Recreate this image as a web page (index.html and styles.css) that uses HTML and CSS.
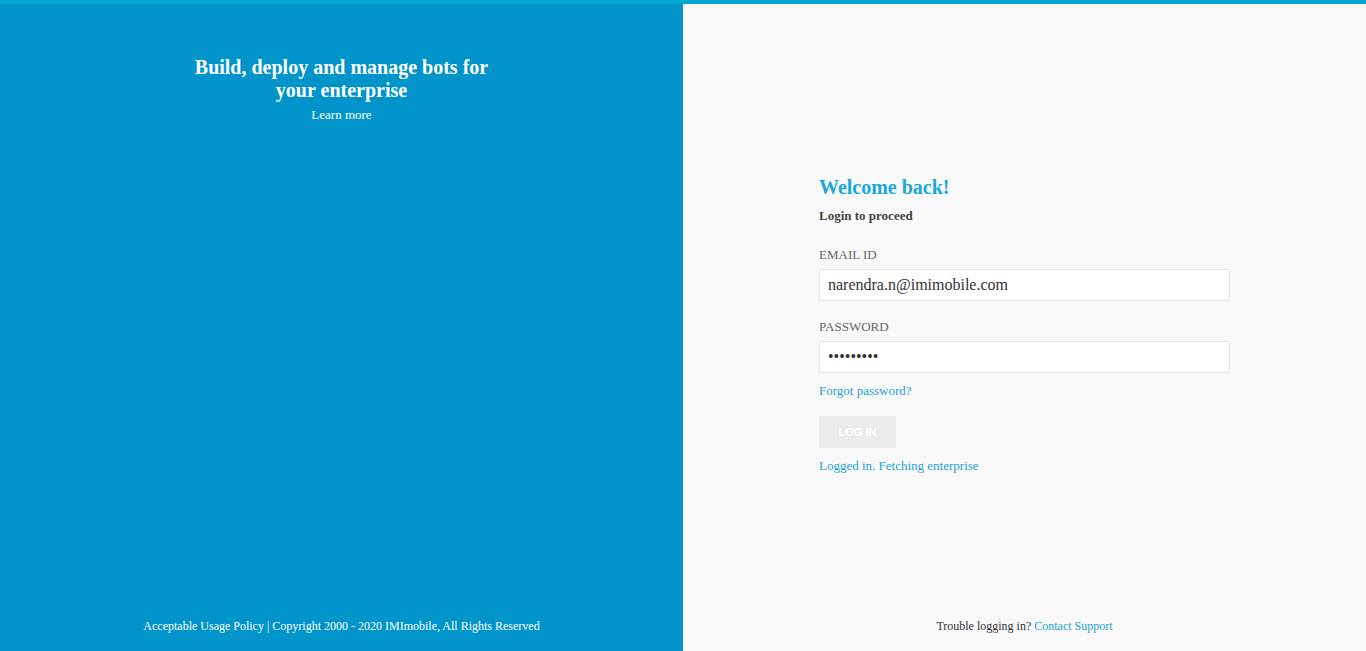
FILE: index.html
```html
<!DOCTYPE html>
<html lang="en">
<head>
<meta charset="utf-8">
<title>Login</title>
<link rel="stylesheet" href="styles.css">
</head>
<body>
<div class="topbar"></div>
<main class="split">
  <section class="brand">
    <div class="brand-copy">
      <h1 class="brand-title">Build, deploy and manage bots for your enterprise</h1>
      <a class="brand-link" href="#">Learn more</a>
    </div>
    <footer class="foot foot-left">Acceptable Usage Policy | Copyright 2000 - 2020 IMImobile, All Rights Reserved</footer>
  </section>
  <section class="login">
    <form class="login-form">
      <h2 class="welcome">Welcome back!</h2>
      <p class="sub">Login to proceed</p>
      <label class="field-label first" for="email">EMAIL ID</label>
      <input class="field" id="email" type="text" value="narendra.n@imimobile.com">
      <label class="field-label" for="pw">PASSWORD</label>
      <input class="field" id="pw" type="password" value="123456789">
      <a class="link forgot" href="#">Forgot password?</a>
      <button class="btn" type="button">LOG IN</button>
      <div class="status">Logged in. Fetching enterprise</div>
    </form>
    <footer class="foot foot-right">Trouble logging in? <a class="link" href="#">Contact Support</a></footer>
  </section>
</main>
</body>
</html>
```
FILE: styles.css
```css
* { box-sizing: border-box; }
html, body { margin: 0; padding: 0; height: 100%; }
body {
  font-family: "Liberation Serif", "Times New Roman", serif;
  background: #f9f9f9;
  overflow: hidden;
}
.topbar { height: 4px; background: #00a8d3; }
.split {
  display: grid;
  grid-template-columns: 683px 1fr;
  height: 647px;
}
.brand {
  background: #0094ca;
  color: #fff;
  display: flex;
  flex-direction: column;
  align-items: center;
  padding-top: 52px;
}
.brand-copy { text-align: center; width: 310px; }
.brand-title {
  margin: 0;
  font-size: 20px;
  line-height: 23px;
  font-weight: bold;
}
.brand-link {
  display: block;
  margin-top: 5px;
  color: #fff;
  text-decoration: none;
  font-size: 13px;
  line-height: 16px;
}
.foot {
  margin-top: auto;
  padding-bottom: 17px;
  font-size: 12px;
  line-height: 16px;
  text-align: center;
}
.foot-left { color: #fff; }
.foot-right { color: #333; }
.login {
  display: flex;
  flex-direction: column;
  align-items: center;
  padding-top: 172px;
}
.login-form { width: 411px; display: flex; flex-direction: column; align-items: flex-start; }
.welcome {
  margin: 0;
  font-size: 20px;
  line-height: 23px;
  font-weight: bold;
  color: #1aa8d6;
}
.sub {
  margin: 9px 0 0;
  font-size: 13px;
  line-height: 16px;
  font-weight: bold;
  color: #444;
}
.field-label {
  margin-top: 18px;
  font-size: 13px;
  line-height: 16px;
  color: #666;
}
.field-label.first { margin-top: 23px; }
.field {
  margin-top: 6px;
  width: 411px;
  height: 32px;
  border: 1px solid #e2e2e2;
  border-radius: 2px;
  background: #fff;
  padding: 0 8px;
  font-family: "Liberation Serif", "Times New Roman", serif;
  font-size: 16px;
  color: #333;
  outline: none;
}
.link { color: #1ba3d6; text-decoration: none; }
.forgot {
  margin-top: 10px;
  font-size: 13px;
  line-height: 16px;
}
.btn {
  margin-top: 17px;
  width: 77px;
  height: 32px;
  border: 0;
  border-radius: 2px;
  background: #ebebeb;
  color: #fff;
  font-family: "Liberation Sans", Arial, sans-serif;
  font-weight: bold;
  font-size: 11px;
  padding: 0;
}
.status {
  margin-top: 10px;
  font-size: 13px;
  line-height: 16px;
  color: #1ba3d6;
}
```
